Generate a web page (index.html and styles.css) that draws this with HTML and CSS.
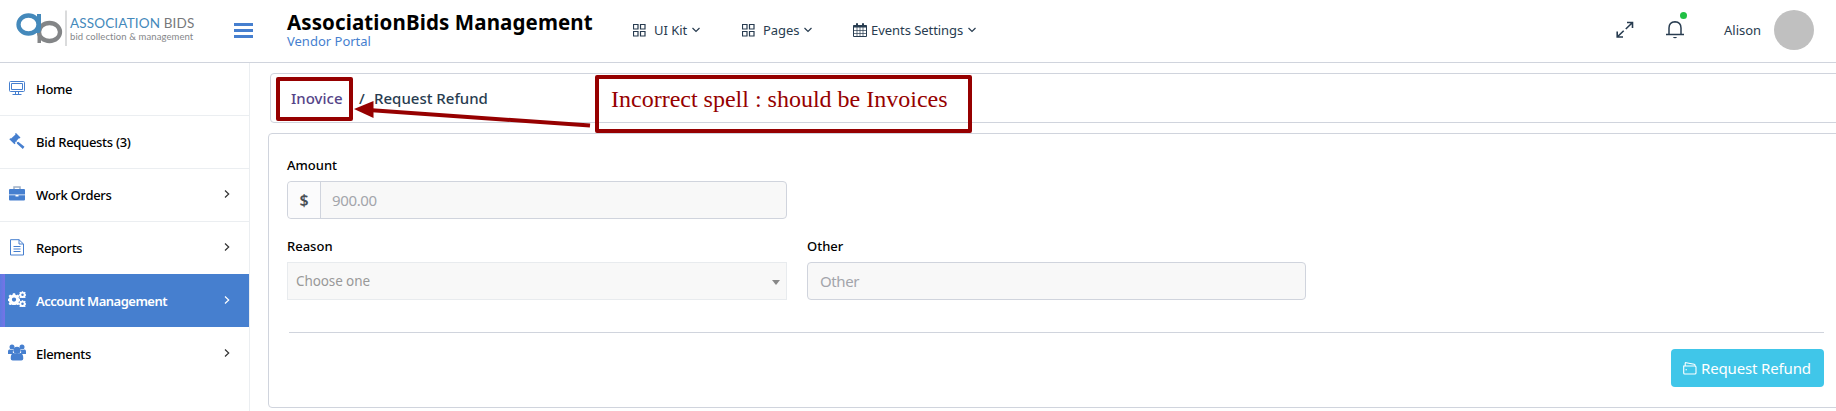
FILE: index.html
```html
<!DOCTYPE html>
<html lang="en">
<head>
<meta charset="utf-8">
<title>AssociationBids Management</title>
<link rel="stylesheet" href="styles.css">
</head>
<body>
<svg class="defs" width="0" height="0">
  <symbol id="grid" viewBox="0 0 13 13"><path d="M.5 .5h4.500v4.500H.5zM7.500 .5h4.500v4.500H7.500zM.5 7.500h4.500v4.500H.5zM7.500 7.500h4.500v4.500H7.500z" fill="none" stroke="currentColor" stroke-width="1.200"/></symbol>
  <symbol id="down" viewBox="0 0 8 6"><path d="M.5 1l3.500 3.500l3.500-3.500" fill="none" stroke="currentColor" stroke-width="1.200"/></symbol>
  <symbol id="right" viewBox="0 0 6 8"><path d="M1 .5l3.700 3.500l-3.700 3.500" fill="none" stroke="currentColor" stroke-width="1.200"/></symbol>
  <symbol id="gear" viewBox="-10 -10 20 20"><path fill-rule="evenodd" d="M-1.800-9.500h3.600l.6 2.600 1.900.8 2.300-1.500 2.500 2.500-1.500 2.300.8 1.900 2.600.6v3.600l-2.600.6-.8 1.900 1.500 2.300-2.500 2.500-2.300-1.500-1.900.8-.6 2.600h-3.600l-.6-2.600-1.900-.8-2.300 1.500-2.500-2.500 1.500-2.300-.8-1.900-2.600-.6v-3.600l2.600-.6.8-1.900-1.500-2.300 2.500-2.500 2.300 1.500 1.900-.8zM3.600 .9a3.600 3.600 0 1 0-7.200 0a3.600 3.600 0 1 0 7.200 0z" fill="currentColor"/></symbol>
</svg>
<header class="topbar">
  <div class="brand">
    <svg class="mark" width="54" height="38" viewBox="0 0 54 38">
      <ellipse cx="12.500" cy="14.500" rx="10" ry="9" fill="none" stroke="#4489bb" stroke-width="4.300"/>
      <path d="M21.500 13.500h3.500v19.500h-3.500z" fill="#838587"/>
      <ellipse cx="33.500" cy="22" rx="10.500" ry="9" fill="none" stroke="#838587" stroke-width="4.300"/>
      <path d="M21 4h4v13q0 4-1.500 6h-5q2.500-2.500 2.500-6z" fill="#4489bb"/>
      <path d="M50 .5v35.500" stroke="#b5b7b9"/>
    </svg>
    <div class="brand-text"><div class="brand-name"><span>ASSOCIATION</span> BIDS</div><div class="brand-tag">bid collection &amp; management</div></div>
  </div>
  <div class="burger"><i></i><i></i><i></i></div>
  <div class="heading"><h1>AssociationBids Management</h1><div class="portal">Vendor Portal</div></div>
  <nav class="menu">
    <a class="m1"><svg width="13" height="13"><use href="#grid"/></svg><span>UI Kit</span><svg width="8" height="6"><use href="#down"/></svg></a>
    <a class="m2"><svg width="13" height="13"><use href="#grid"/></svg><span>Pages</span><svg width="8" height="6"><use href="#down"/></svg></a>
    <a class="m3"><svg width="14" height="14" viewBox="0 0 14 14"><path d="M.5 2.500h13v11h-13z" fill="none" stroke="currentColor"/><path d="M.5 2.500h13v2H.5zM3 .3h2v3.500H3zM9 .3h2v3.500H9z" fill="currentColor"/><path d="M0 7.500h14M0 10.500h14M4 4v9.500M7 4v9.500M10 4v9.500" stroke="currentColor" stroke-width=".7"/></svg><span>Events Settings</span><svg width="8" height="6"><use href="#down"/></svg></a>
  </nav>
  <div class="tools">
    <svg width="18" height="18" viewBox="0 0 18 18" fill="none" stroke="#283c50" stroke-width="1.600"><path d="M11 1.500h5.500v5.500M16.500 1.500l-6.700 6.500M1.200 10.500V16h5.800M1.200 16l6.500-6.300"/></svg>
    <div class="bell"><svg width="18" height="20" viewBox="0 0 18 20" fill="none" stroke="#283c50" stroke-width="1.500"><path d="M0 14.500h18M3 14.500V8q0-6 6-6.300Q15 2 15 8v6.500"/><path d="M6.800 17q2.200 2.500 4.400 0z" fill="#283c50" stroke="none"/></svg><b></b></div>
    <span class="user">Alison</span>
    <div class="avatar"></div>
  </div>
</header>
<div class="body">
  <aside class="side">
    <a class="item"><svg width="18" height="16" viewBox="0 0 18 16" fill="none" stroke="currentColor"><rect x="1.500" y="1.500" width="15" height="10" rx="1"/><path d="M3.500 3.500h11v6h-11zM7.500 11.500v3M10.500 11.500v3M4.500 14.500h9"/></svg><span>Home</span></a>
    <a class="item"><svg width="18" height="16" viewBox="0 0 18 16" fill="currentColor"><path d="M8 0l4.500 4.500-1 1-.6-.3-2.700 3 1.300 1 .8-.5 6.200 5-1.700 2.300-6-5.500.3-.9-1.200-1-.8.8.4.800-1 1L1.300 6.200l1-1 .8.300 4.400-4-.5-.7z"/></svg><span>Bid Requests (3)</span></a>
    <a class="item"><svg width="18" height="16" viewBox="0 0 18 16"><path d="M6 3.500V1h6v2.500" fill="none" stroke="#9fb0c6" stroke-width="1.500"/><path d="M2 3h14q1 0 1 1v4.500H1V4q0-1 1-1zM1 9.300h6.500v1.200h3V9.300H17v4.200q0 1-1 1H2q-1 0-1-1z" fill="currentColor"/></svg><span>Work Orders</span><svg class="go" width="6" height="8"><use href="#right"/></svg></a>
    <a class="item"><svg width="18" height="17" viewBox="0 0 18 17" fill="none" stroke="currentColor"><path d="M2.500 .7h8.500l4.500 4.300v11h-13zM11 .7v4.300h4.500M5.500 7.500h7M5.500 10h7M5.500 12.500h7"/></svg><span>Reports</span><svg class="go" width="6" height="8"><use href="#right"/></svg></a>
    <a class="item active"><svg width="18" height="17" viewBox="0 0 18 17"><use href="#gear" x="0" y="2" width="12" height="12"/><use href="#gear" x="11" y="0" width="7" height="7"/><use href="#gear" x="11" y="9" width="7" height="7"/></svg><span>Account Management</span><svg class="go" width="6" height="8"><use href="#right"/></svg></a>
    <a class="item last"><svg width="18" height="17" viewBox="0 0 18 17" fill="currentColor"><circle cx="4" cy="3" r="2.500"/><circle cx="14" cy="3" r="2.500"/><path d="M0 10V7.500Q0 5 2 5.500q2 1 3.500 0Q4 8 5.500 10zM18 10V7.500Q18 5 16 5.500q-2 1-3.500 0Q14 8 12.500 10z"/><circle cx="9" cy="6.300" r="3.600"/><path d="M2.700 14.500q0-5.500 3.300-5.500 3 2 6 0 3.300 0 3.300 5.500 0 2-2 2H4.700q-2 0-2-2z"/></svg><span>Elements</span><svg class="go" width="6" height="8"><use href="#right"/></svg></a>
  </aside>
  <main class="main">
    <div class="crumbs"><a>Inovice</a><span class="slash">/</span><span>Request Refund</span></div>
    <section class="card">
      <div class="field">
        <label>Amount</label>
        <div class="group"><span class="addon">$</span><span class="value">900.00</span></div>
      </div>
      <div class="row">
        <div class="field"><label>Reason</label><div class="select"><span>Choose one</span><i></i></div></div>
        <div class="field other"><label>Other</label><div class="input">Other</div></div>
      </div>
      <hr>
      <button class="refund"><svg width="14" height="13" viewBox="0 0 14 13" fill="none" stroke="#fff" stroke-width="1.100"><path d="M.7 4h11.100q1.200 0 1.200 1v6q0 1-1.200 1H1.700q-1 0-1-1zM2.200 4V1.500q0-1 1-.8l8 1.600q1 .2 1 1.700"/><path d="M2.500 7.700h1.500"/></svg><span>Request Refund</span></button>
    </section>
  </main>
</div>
<div class="mark-box"></div>
<div class="note">Incorrect spell : should be Invoices</div>
<svg class="arrow" width="240" height="30" viewBox="0 0 240 30"><path d="M18 10.200L236 25.500" stroke="#960000" stroke-width="4"/><path d="M0 9L19.500 1v17z" fill="#960000"/></svg>
</body>
</html>
```
FILE: styles.css
```css
* { box-sizing: border-box; }
body { margin: 0; width: 1836px; height: 411px; overflow: hidden; background: #fff; font: 13px/20px "Noto Sans", "Open Sans", sans-serif; color: #283c50; position: relative; }
svg { display: block; flex: none; }
span, h1, .portal { white-space: nowrap; }
.defs { position: absolute; }
.topbar { height: 63px; border-bottom: 1px solid #d0d4dd; display: flex; align-items: flex-start; }
.brand { display: flex; width: 234px; padding: 10px 0 0 16px; }
.brand-text { padding: 4px 0 0; font-family: Lato, sans-serif; }
.brand-name { font-size: 13.5px; line-height: 19px; color: #77797b; white-space: nowrap; letter-spacing: .15px; }
.brand-name span { color: #4489bb; }
.brand-tag { font-size: 9.5px; line-height: 8px; color: #85878a; white-space: nowrap; letter-spacing: .08px; }
.burger { width: 54px; padding-top: 23px; display: flex; flex-direction: column; gap: 3px; }
.burger i { width: 19px; height: 3px; background: #467fcf; }
.heading { width: 345px; padding-top: 10px; }
h1 { margin: 0 0 0 -1px; font-size: 20.5px; line-height: 25px; color: #000; letter-spacing: .11px; }
.portal { font-size: 13px; line-height: 13px; color: #467fcf; margin-left: -1px; }
.menu { display: flex; height: 60px; align-items: center; }
.menu a { display: flex; align-items: center; }
.menu span { margin-right: 5px; letter-spacing: -.05px; }
.m1 { width: 109px; }
.m2 { width: 111px; }
.m1 svg:first-child, .m2 svg:first-child { margin-right: 8px; }
.m3 svg:first-child { margin-right: 4px; }
.tools { margin-left: auto; display: flex; align-items: center; height: 60px; padding-right: 22px; }
.bell { position: relative; margin: 0 40px 0 32px; }
.bell b { position: absolute; left: 14px; top: -8px; width: 7px; height: 7px; border-radius: 50%; background: #21c044; }
.user { width: 50px; }
.avatar { width: 40px; height: 40px; border-radius: 50%; background: #c0c0c0; }
.body { display: flex; height: 348px; }
.side { width: 250px; flex: none; border-right: 1px solid #ebeef1; }
.item { display: flex; align-items: center; height: 53px; padding: 0 19px 0 8px; border-bottom: 1px solid #ebeef1; color: #467fcf; font-weight: 500; }
.item svg:first-child { margin: 0 10px 2px 0; }
.item span { color: #000; flex: 1; letter-spacing: -.3px; }
.item .go { color: #333; margin-bottom: 2px; }
.item.active { background: linear-gradient(90deg, #5b7be0, #7673e6 5px, #467fcf 5px); margin-top: -1px; color: #fff; font-weight: 600; border-bottom: 0; }
.item.active span { color: #fff; letter-spacing: -.5px; }
.item.active .go { color: #fff; }
.item.last { border: 0; }
.main { flex: 1; padding-top: 10px; }
.crumbs { width: 1600px; height: 50px; margin-left: 20px; border: 1px solid #d0d4dd; border-radius: 4px; display: flex; align-items: center; font-size: 15px; font-weight: 500; padding-left: 20px; }
.crumbs a { color: #554488; width: 68px; }
.slash { width: 15px; }
.card { width: 1600px; height: 275px; margin: 10px 0 0 18px; border: 1px solid #d0d4dd; border-radius: 4px; padding: 20px 0 0 18px; }
.field { width: 500px; }
.other { width: 499px; }
label { display: block; height: 27px; line-height: 22px; color: #000; font-weight: 500; }
.group, .select, .input { height: 38px; border: 1px solid #d0d4dd; border-radius: 4px; background: #f8f8f8; display: flex; align-items: center; color: #a3a5ab; }
.addon { width: 33px; height: 36px; border-right: 1px solid #d0d4dd; background: #fbfbfc; border-radius: 4px 0 0 4px; color: #495057; font-size: 16px; font-weight: 600; text-align: center; line-height: 36px; }
.value { padding-left: 11px; font-size: 15px; letter-spacing: -.35px; }
.row { display: flex; gap: 20px; margin-top: 16px; }
.select { border-color: #e8ebee; border-radius: 0; justify-content: space-between; padding: 0 6px 0 8px; color: #999; font-size: 13.5px; letter-spacing: -.1px; }
.select i { border: 4px solid transparent; border-top: 5px solid #888; border-bottom: 0; margin-top: 3px; }
.input { padding-left: 12px; font-size: 15px; letter-spacing: -.4px; }
hr { width: 1535px; margin: 32px 0 0 2px; border: 0; border-top: 1px solid #d0d4dd; }
.refund { display: flex; align-items: center; gap: 4px; width: 153px; height: 38px; margin: 16px 0 0 1384px; padding: 0 0 0 12px; background: #40c6e9; border: 0; border-radius: 4px; color: #fff; font: 15px/20px "Noto Sans", sans-serif; letter-spacing: -.15px; }
.mark-box { position: absolute; left: 276px; top: 77px; width: 77px; height: 44px; border: 4px solid #960000; border-radius: 2px; }
.note { position: absolute; left: 595px; top: 75px; width: 377px; height: 58px; border: 4px solid #960000; border-radius: 2px; padding-left: 12px; font: 24px/40px "Liberation Serif", serif; color: #960000; white-space: nowrap; }
.arrow { position: absolute; left: 354px; top: 100px; }
```
